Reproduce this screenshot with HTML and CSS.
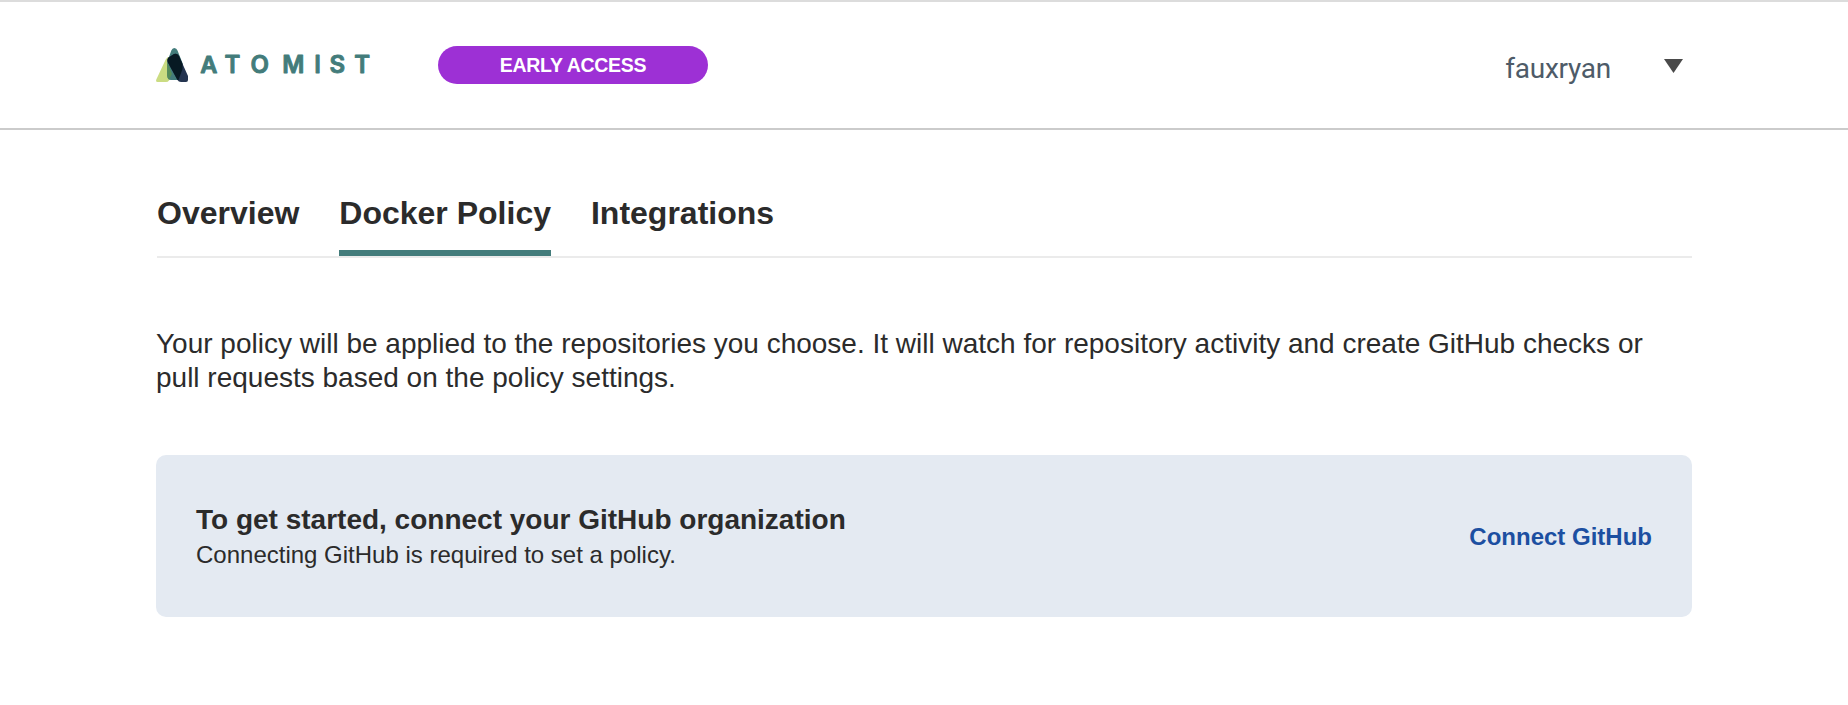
FILE: index.html
```html
<!DOCTYPE html>
<html lang="en">
<head>
<meta charset="utf-8">
<title>Atomist - Docker Policy</title>
<link rel="stylesheet" href="styles.css">
</head>
<body>
<header class="header">
  <div class="brand">
    <svg class="logo" width="220" height="40" viewBox="0 0 220 40" role="img" aria-label="Atomist">
      <path fill="#cbdc82" d="M9.700 11.500Q11 8.700 13.500 8.700Q17.500 8.700 19 11L19 24L13 32.500Q12 34 10 34H1.500Q-.5 34 .3 31.500Z"/>
      <path fill="#437c7b" d="M15.300 2.500Q16.300 0 18.300 0Q20.600 0 21.500 2.500L26.500 15V28Q25.500 32 22 32H15Q11.500 32 11.200 28V14Z"/>
      <path fill="#558c57" d="M11.300 14L16 26L13 31.500Q11.500 30 11.200 27Z"/>
      <path fill="#243450" d="M11.900 14.500Q10.600 11.500 12.600 9.500L18 6Q21 4.700 23 8L32 28V32Q32 34 30 34H25Q22.500 34 21.500 32Z"/>
      <path fill="#071923" d="M11.900 14.500Q10.600 11.500 12.600 9.500L18 6Q21 4.700 23 8L26.500 16V21L22.500 32H21.500Z"/>
      <text class="wordmark" x="44.300 0" y="24.600">A</text>
      <text class="wordmark wordmark-wide" x="68.600" y="24.600">T</text>
      <text class="wordmark wordmark-wide" x="94.500 126.300 158.300 173.500 198.300" y="24.600">OMIST</text>
    </svg>
    <span class="badge">EARLY ACCESS</span>
  </div>
  <div class="account">
    <span class="account-name">fauxryan</span>
    <svg class="caret" width="19" height="14" viewBox="0 0 19 14"><path fill="#4a4a4a" d="M0 0H19L9.500 14Z"/></svg>
  </div>
</header>
<main class="main">
  <nav class="tabs">
    <a class="tab">Overview</a>
    <a class="tab tab-active">Docker Policy</a>
    <a class="tab">Integrations</a>
  </nav>
  <p class="intro">Your policy will be applied to the repositories you choose. It will watch for repository activity and create GitHub checks or pull requests based on the policy settings.</p>
  <section class="notice">
    <div class="notice-copy">
      <h2 class="notice-title">To get started, connect your GitHub organization</h2>
      <p class="notice-text">Connecting GitHub is required to set a policy.</p>
    </div>
    <a class="notice-link">Connect GitHub</a>
  </section>
</main>
</body>
</html>
```

FILE: styles.css
```css
* { box-sizing: border-box; }
body {
  margin: 0;
  background: #fff;
  color: #2b2b2b;
  font-family: "Liberation Sans", Arial, sans-serif;
}
.header {
  display: flex;
  justify-content: space-between;
  align-items: flex-start;
  height: 130px;
  padding: 0 165px 0 156px;
  border-top: 2px solid #dcdcdc;
  border-bottom: 2px solid #cbcbcb;
}
.brand { display: flex; }
.logo { margin-top: 46px; overflow: visible; }
.wordmark {
  font: 600 23.500px Inter, sans-serif;
  fill: #437c7b;
  stroke: #437c7b;
  stroke-width: .9px;
  stroke-linejoin: round;
}
.wordmark-wide { font-size: 24px; }
.badge {
  width: 270px;
  height: 38px;
  margin: 44px 0 0 62px;
  border-radius: 19px;
  background: #9d30d5;
  color: #fff;
  font-size: 19.500px;
  font-weight: 700;
  line-height: 39px;
  letter-spacing: -.3px;
  text-align: center;
}
.account { display: flex; }
.account-name {
  margin: 50px 53px 0 0;
  color: #4e5b68;
  font: 400 28px/34px Roboto, sans-serif;
  letter-spacing: -.25px;
}
.caret { margin-top: 57px; }
.main { padding: 62px 156px 0; }
.tabs {
  display: flex;
  gap: 40px;
  height: 66px;
  margin-left: 1px;
  border-bottom: 2px solid #ebebeb;
}
.tab {
  height: 64px;
  font-size: 32px;
  line-height: 42px;
  font-weight: 700;
}
.tab-active { border-bottom: 6px solid #437c7b; }
.intro {
  margin: 69px 0 60px;
  font-size: 28px;
  line-height: 34px;
}
.notice {
  display: flex;
  justify-content: space-between;
  align-items: center;
  height: 162px;
  padding: 2px 40px 0;
  border-radius: 10px;
  background: #e4eaf2;
}
.notice-title { margin: 0; font-size: 28px; line-height: 36px; }
.notice-text { margin: 0; font-size: 24px; line-height: 34px; }
.notice-link { color: #1c4fa1; font-size: 24px; font-weight: 700; }
```
